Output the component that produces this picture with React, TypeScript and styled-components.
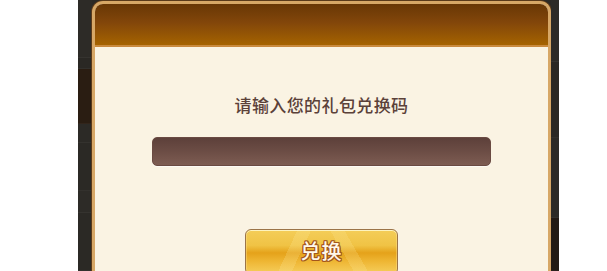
import styled, { createGlobalStyle } from "styled-components";

const GlobalStyle = createGlobalStyle`
  html, body {
    margin: 0;
    padding: 0;
    background: #ffffff;
    overflow: hidden;
  }
  body {
    font-family: "Noto Sans CJK SC", "Noto Sans", sans-serif;
  }
`;

const Page = styled.div`
  width: 607px;
  height: 271px;
  display: flex;
  padding-left: 78px;
  box-sizing: border-box;
`;

const Stage = styled.div`
  width: 481px;
  height: 271px;
  display: flex;
  background: #2b2925;
  overflow: hidden;
`;

const SideStrip = styled.div<{ $width: number }>`
  width: ${(p) => p.$width}px;
  flex-shrink: 0;
  display: flex;
  flex-direction: column;
`;

const StripBand = styled.div<{ $h: number; $bg: string }>`
  height: ${(p) => p.$h}px;
  background: ${(p) => p.$bg};
  border-bottom: 1px solid rgba(255, 255, 255, 0.04);
`;

const Dialog = styled.div`
  flex: 1;
  margin-top: 1px;
  display: flex;
  flex-direction: column;
  border: 3px solid #d7a766;
  border-bottom: none;
  border-radius: 11px 11px 0 0;
  background: #faf3e3;
  overflow: hidden;
  box-shadow: 0 0 0 1px #5a3a1a;
`;

const Header = styled.div`
  height: 41px;
  flex-shrink: 0;
  background: linear-gradient(to bottom, #683705 0%, #82460a 45%, #a56300 100%);
  border-bottom: 2px solid #c98a3e;
`;

const Body = styled.div`
  flex: 1;
  display: flex;
  flex-direction: column;
  align-items: center;
  padding-top: 48px;
`;

const Title = styled.div`
  font-size: 17px;
  line-height: 20px;
  font-weight: 500;
  color: #5b4139;
  letter-spacing: 0.4px;
`;

const CodeInput = styled.input`
  margin-top: 22px;
  width: 339px;
  height: 29px;
  box-sizing: border-box;
  border: 1px solid #6a4a42;
  border-radius: 5px;
  background: linear-gradient(to bottom, #5d403a 0%, #6c4d45 50%, #7d5c52 100%);
  box-shadow: 0 1px 0 rgba(255, 255, 255, 0.6);
  outline: none;
  padding: 0 10px;
  color: #f5e8d8;
  font-size: 14px;
  font-family: inherit;
`;

const RedeemButton = styled.button`
  margin-top: 63px;
  width: 153px;
  height: 46px;
  box-sizing: border-box;
  border: 1px solid #9b7448;
  border-radius: 6px;
  padding: 0 0 4px;
  background:
    linear-gradient(115deg, transparent 0 30%, rgba(255, 240, 170, 0.2) 30% 38%, transparent 38% 100%),
    linear-gradient(60deg, transparent 0 62%, rgba(255, 236, 160, 0.2) 62% 70%, transparent 70% 100%),
    linear-gradient(to bottom, #f4cd58 0%, #f0c345 35%, #e5a21a 52%, #eeb532 70%, #f6cf5e 100%);
  box-shadow: inset 0 1px 0 rgba(255, 250, 210, 0.8), inset 0 0 0 1px rgba(255, 230, 150, 0.4);
  color: #fff8ea;
  font-family: "Noto Sans CJK SC", sans-serif;
  font-size: 20px;
  font-weight: 500;
  letter-spacing: 1px;
  text-shadow:
    1px 0 0 #a3561c,
    -1px 0 0 #a3561c,
    0 1px 0 #a3561c,
    0 -1px 0 #a3561c,
    1px 1px 0 #a3561c,
    -1px -1px 0 #a3561c,
    1px -1px 0 #a3561c,
    -1px 1px 0 #a3561c;
  cursor: pointer;
`;

const leftBands = [
  { h: 58, bg: "#2d2b27" },
  { h: 10, bg: "#2a2824" },
  { h: 56, bg: "#2a1d12" },
  { h: 18, bg: "#2c2a26" },
  { h: 48, bg: "#2b2925" },
  { h: 22, bg: "#2d2b27" },
  { h: 58, bg: "#2b2925" },
];

const rightBands = [
  { h: 62, bg: "#2d2b27" },
  { h: 76, bg: "#2a2824" },
  { h: 80, bg: "#2c2a26" },
  { h: 53, bg: "#221a14" },
];

export default function App() {
  return (
    <>
      <GlobalStyle />
      <Page>
        <Stage>
          <SideStrip $width={14}>
            {leftBands.map((b, i) => (
              <StripBand key={i} $h={b.h} $bg={b.bg} />
            ))}
          </SideStrip>
          <Dialog>
            <Header />
            <Body>
              <Title>请输入您的礼包兑换码</Title>
              <CodeInput aria-label="礼包兑换码" />
              <RedeemButton type="button">兑换</RedeemButton>
            </Body>
          </Dialog>
          <SideStrip $width={8}>
            {rightBands.map((b, i) => (
              <StripBand key={i} $h={b.h} $bg={b.bg} />
            ))}
          </SideStrip>
        </Stage>
      </Page>
    </>
  );
}
